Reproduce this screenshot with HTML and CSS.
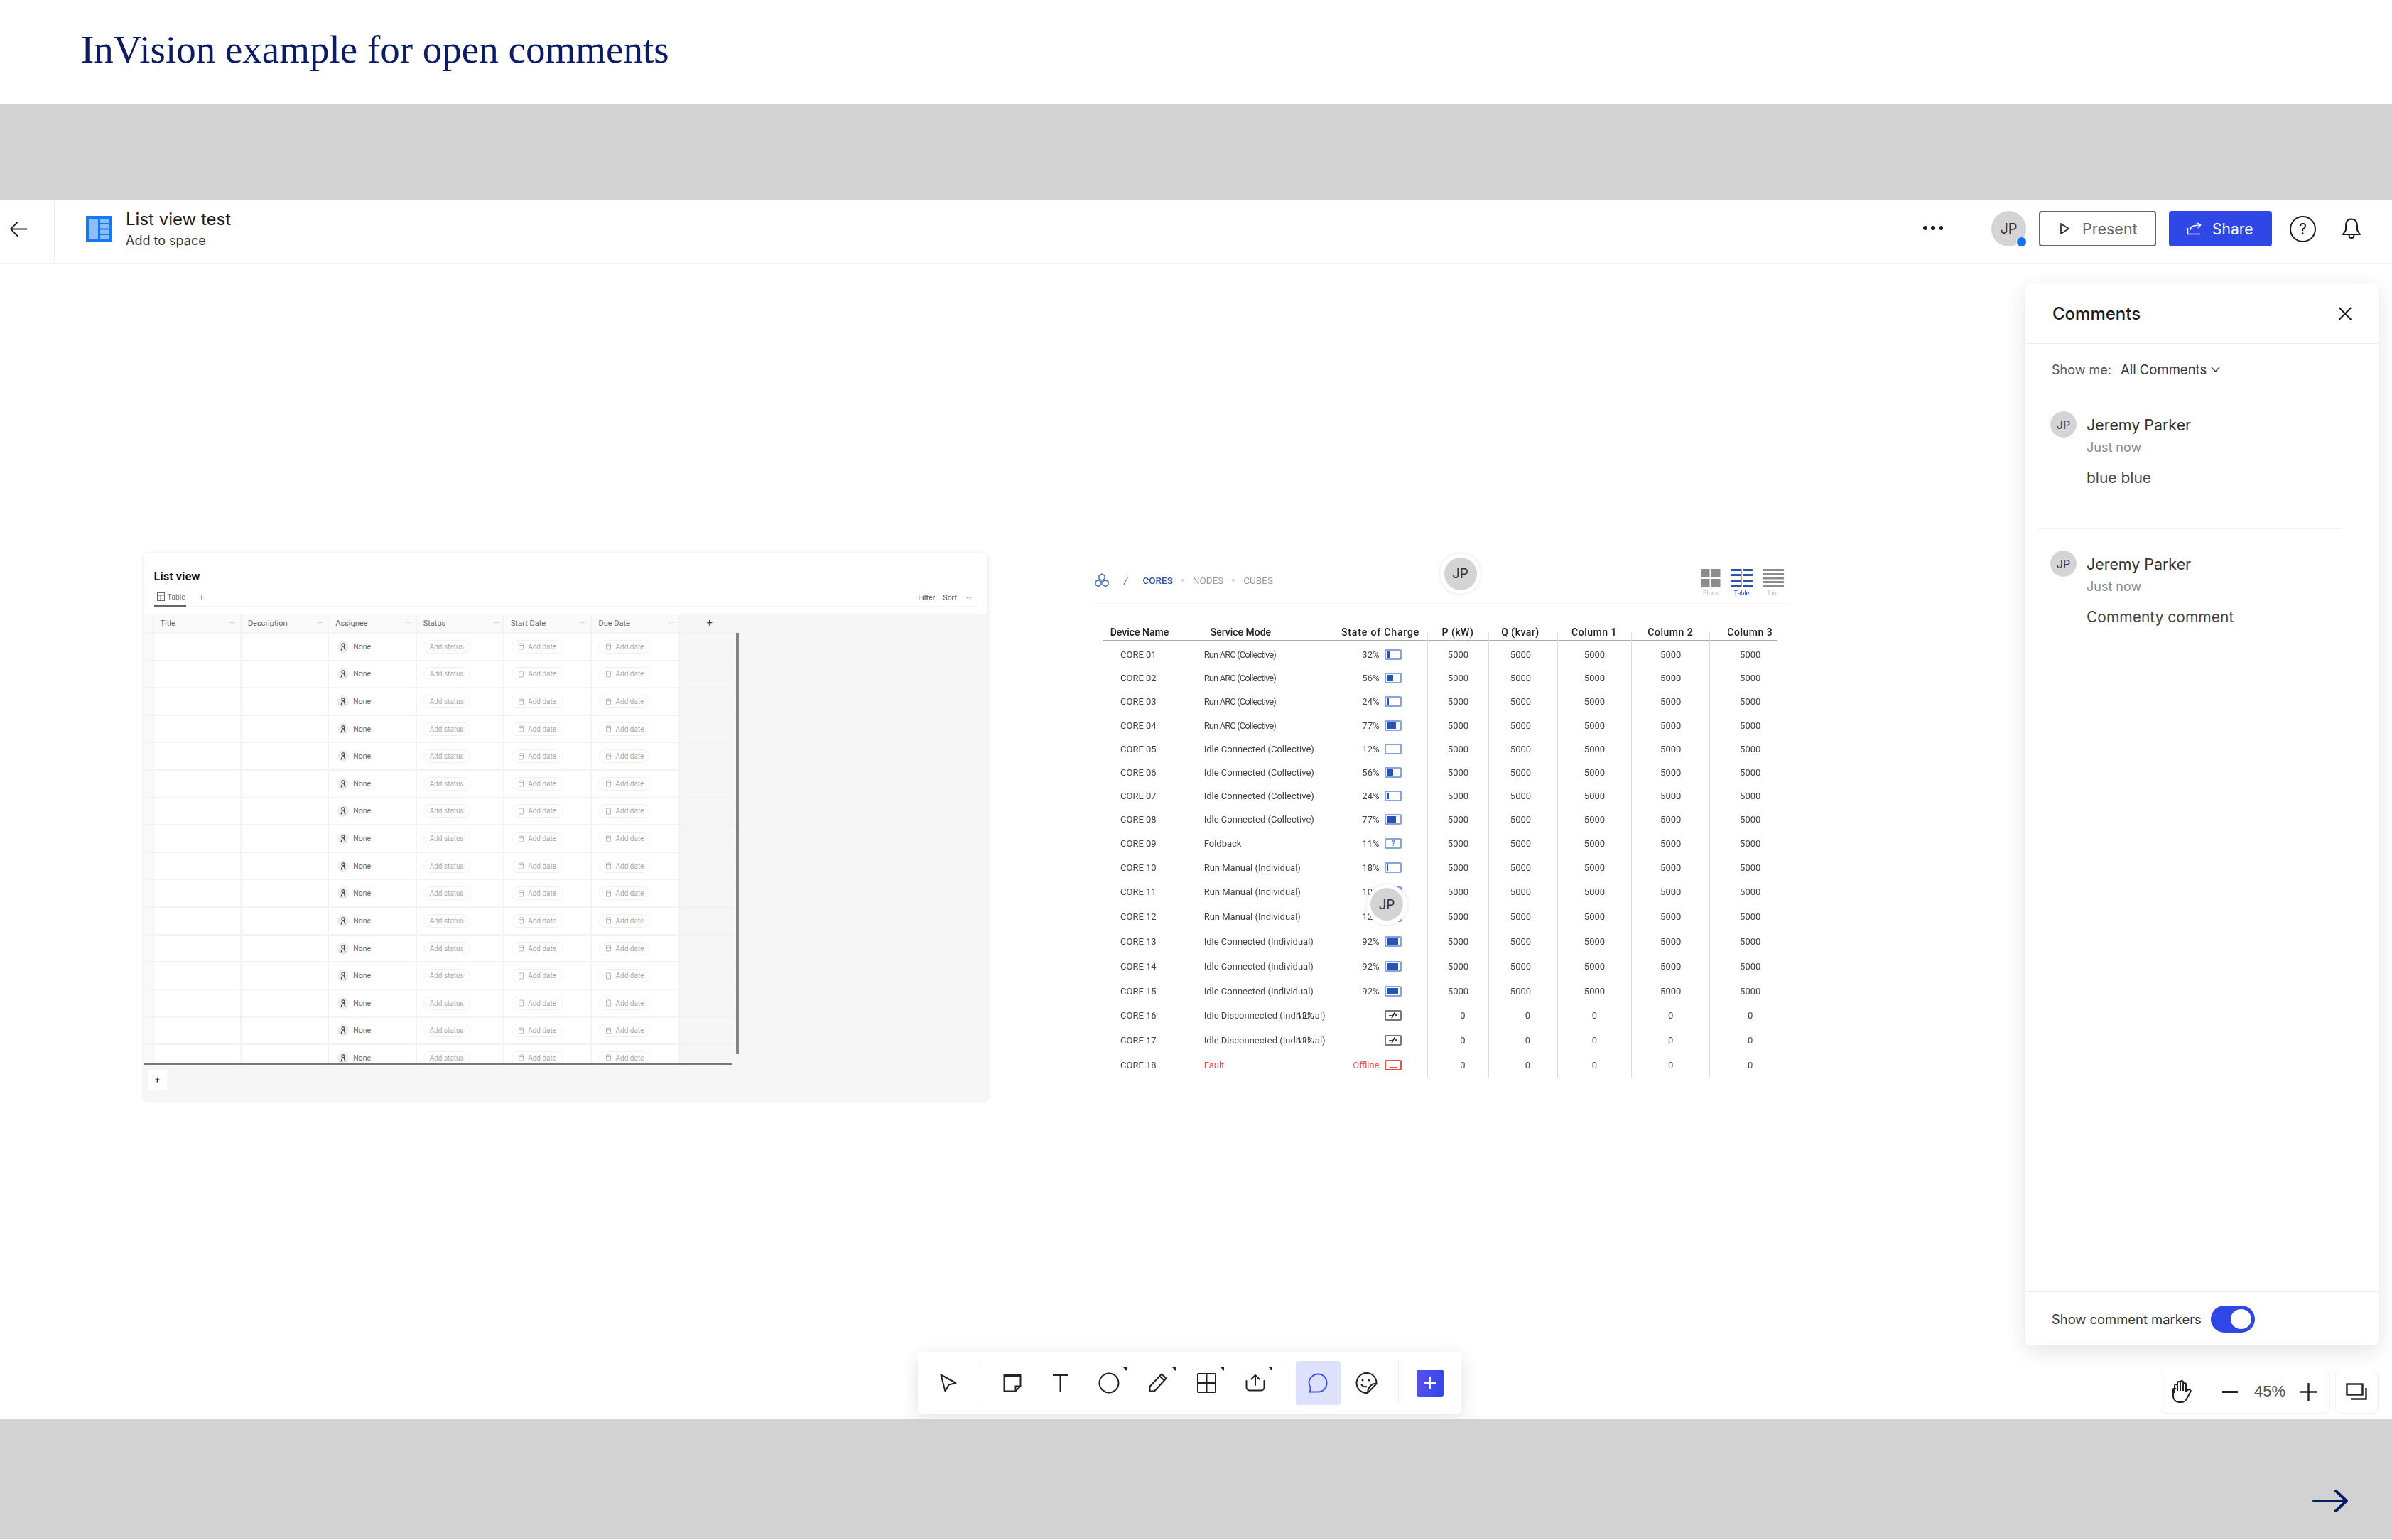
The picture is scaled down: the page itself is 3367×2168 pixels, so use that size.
FILE: index.html
```html
<!DOCTYPE html>
<html lang="en">
  <head>
    <meta charset="UTF-8" />
    <title>InVision example for open comments</title>
    <link rel="stylesheet" href="styles.css">
  </head>
  <body>
    <header class="page-head">
      <h1 class="page-title">InVision example for open comments</h1>
    </header>
    <div class="band band-top"></div>

    <main class="app">
      <div class="topbar">
        <div class="back-cell">
          <svg width="26" height="23" viewBox="0 0 26 23" fill="none" stroke="#222" stroke-width="1.8"><path d="M12 1.5 2 11.5l10 10M2 11.5h23" /></svg>
        </div>
        <div class="file">
          <svg width="37" height="37" viewBox="0 0 37 37"><rect width="37" height="37" fill="#1877f2" /><rect x="4" y="5" width="13" height="27" fill="#8fbdf9" /><rect x="20" y="5" width="12" height="5" fill="#8fbdf9" /><rect x="20" y="12" width="12" height="5.5" fill="#8fbdf9" /><rect x="20" y="19.5" width="12" height="5.5" fill="#8fbdf9" /><rect x="20" y="27" width="12" height="5" fill="#8fbdf9" /></svg>
          <div class="file-text">
            <div class="file-name">List view test</div>
            <div class="file-sub">Add to space</div>
          </div>
        </div>
        <div class="topbar-right">
          <div class="more-dots"><span></span><span></span><span></span></div>
          <div class="user-avatar">JP<span class="user-dot"></span></div>
          <button class="btn btn-present">
            <svg width="15" height="18" viewBox="0 0 15 18" fill="none" stroke="#333" stroke-width="1.8" stroke-linejoin="round"><path d="M2 2l11 7-11 7z" /></svg>
            Present
          </button>
          <button class="btn btn-share">
            <svg width="21" height="18" viewBox="0 0 21 18" fill="none" stroke="#fff" stroke-width="1.6"><path d="M1.5 8v8.5H19M5 11c0-5 4-7 14-7M15 1l4.500 3-3.500 4" /></svg>
            Share
          </button>
          <div class="help">?</div>
          <svg class="bell" width="28" height="30" viewBox="0 0 28 30" fill="none" stroke="#1b1b1b" stroke-width="2" stroke-linejoin="round"><path d="M14 1.500C8.500 1.500 6 5.500 6 11v6l-4 6h24l-4-6v-6c0-5.500-2.500-9.500-8-9.500zM10.500 23.500c0 6 7 6 7 0" /></svg>
        </div>
      </div>

      <!-- list view frame on the canvas -->
      <section class="list-card">
        <div class="card-head">
          <div class="card-title">List view</div>
          <div class="card-tabs">
            <div class="tab">
              <svg width="11" height="12" viewBox="0 0 11 12" fill="none" stroke="#666"><rect x=".5" y=".5" width="10" height="11" /><path d="M.5 4h10M5 4v7.500" /></svg>
              Table
            </div>
            <span class="tab-add">+</span>
            <div class="card-actions"><span>Filter</span><span>Sort</span><span class="card-dots">···</span></div>
          </div>
        </div>
        <div class="list-table">
          <div class="list-row list-header">
            <div class="list-cell"></div>
            <div class="list-cell">Title<i>···</i></div>
            <div class="list-cell">Description<i>···</i></div>
            <div class="list-cell">Assignee<i>···</i></div>
            <div class="list-cell">Status<i>···</i></div>
            <div class="list-cell">Start Date<i>···</i></div>
            <div class="list-cell">Due Date<i>···</i></div>
            <div class="list-cell list-plus">+</div>
          </div>
          <div id="list-rows"></div>
          <div class="scroll-v"></div>
          <div class="scroll-h"></div>
        </div>
        <div class="card-foot"><div class="add-row">+</div></div>
      </section>

      <!-- cores table frame on the canvas -->
      <section class="sheet">
        <div class="sheet-bar">
          <div class="crumbs">
            <svg width="22" height="20" viewBox="0 0 22 20" fill="none" stroke="#4a6cc0" stroke-width="1.500"><path d="M11 1l4 2.300v4.600l-4 2.300-4-2.300V3.300zM6 9.500l4 2.300v4.600L6 18.700l-4-2.300v-4.600zM16 9.500l4 2.300v4.600l-4 2.300-4-2.300v-4.600z" /></svg>
            <span class="crumb-slash">/</span>
            <span class="crumb-on">CORES</span>
            <span class="crumb-dot"></span>
            <span>NODES</span>
            <span class="crumb-dot"></span>
            <span>CUBES</span>
          </div>
          <div class="views">
            <div class="view">
              <svg width="28" height="26" viewBox="0 0 28 26" fill="#8c8c8c"><rect width="12.500" height="11.500" /><rect x="15" width="12.500" height="11.500" /><rect y="14" width="12.500" height="12" /><rect x="15" y="14" width="12.500" height="12" /></svg>
              <span>Block</span>
            </div>
            <div class="view view-on">
              <svg width="31" height="26" viewBox="0 0 31 26" fill="#2a52b0"><rect width="14" height="3" /><rect x="17" width="14" height="3" /><rect y="7" width="14" height="3" /><rect x="17" y="7" width="14" height="3" /><rect y="15" width="14" height="3" /><rect x="17" y="15" width="14" height="3" /><rect y="23" width="14" height="3" /><rect x="17" y="23" width="14" height="3" /><rect x="15" width="1" height="26" opacity=".5" /></svg>
              <span>Table</span>
            </div>
            <div class="view">
              <svg width="30" height="26" viewBox="0 0 30 26" fill="#8c8c8c"><rect width="30" height="3" /><rect y="5.500" width="30" height="3" /><rect y="11.500" width="30" height="3" /><rect y="17" width="30" height="3" /><rect y="23" width="30" height="3" /></svg>
              <span>List</span>
            </div>
          </div>
        </div>
        <div class="core-row core-head">
          <div>Device Name</div>
          <div>Service Mode</div>
          <div>State of Charge</div>
          <div class="core-num">P (kW)</div>
          <div class="core-num">Q (kvar)</div>
          <div class="core-num">Column 1</div>
          <div class="core-num">Column 2</div>
          <div class="core-num">Column 3</div>
        </div>
        <div id="core-rows"></div>
      </section>

      <div class="marker marker-one"><span>JP</span></div>
      <div class="marker marker-two"><span>JP</span></div>

      <aside class="comments">
        <div class="comments-head">
          <h2>Comments</h2>
          <svg width="20" height="19" viewBox="0 0 20 19" fill="none" stroke="#1b1b1b" stroke-width="2"><path d="M1.500 1l17 17M18.500 1l-17 17" /></svg>
        </div>
        <div class="comments-filter">
          <span>Show me:</span>
          <span class="filter-value">All Comments</span>
          <svg width="13" height="8" viewBox="0 0 13 8" fill="none" stroke="#333" stroke-width="1.400"><path d="M1 1l5.500 6L12 1" /></svg>
        </div>
        <div class="comment">
          <div class="comment-avatar">JP</div>
          <div class="comment-body">
            <div class="comment-name">Jeremy Parker</div>
            <div class="comment-time">Just now</div>
            <div class="comment-text">blue blue</div>
          </div>
        </div>
        <div class="comment-rule"></div>
        <div class="comment">
          <div class="comment-avatar">JP</div>
          <div class="comment-body">
            <div class="comment-name">Jeremy Parker</div>
            <div class="comment-time">Just now</div>
            <div class="comment-text">Commenty comment</div>
          </div>
        </div>
        <div class="comments-foot">
          <span>Show comment markers</span>
          <div class="toggle"><span></span></div>
        </div>
      </aside>

      <div class="toolbar">
        <div class="tool">
          <svg width="24" height="26" viewBox="0 0 24 26" fill="none" stroke="#222" stroke-width="2" stroke-linejoin="round"><path d="M1.500 1.500l21 11.500-10 2.500-5 9z" /></svg>
        </div>
        <div class="tool-sep"></div>
        <div class="tool">
          <svg width="26" height="26" viewBox="0 0 26 26" fill="none" stroke="#222" stroke-width="2"><path d="M1.500 2h23v15.500l-7 7h-16zM24.500 17.500h-7v7" /><path d="M1.500 2.500h23" stroke-width="3" /></svg>
        </div>
        <div class="tool">
          <svg width="21" height="26" viewBox="0 0 21 26" fill="none" stroke="#222" stroke-width="2"><path d="M0 2h21M10.500 2v24" /></svg>
        </div>
        <div class="tool tool-more">
          <svg width="30" height="30" viewBox="0 0 30 30" fill="none" stroke="#222" stroke-width="2"><circle cx="15" cy="15" r="13.500" /></svg>
        </div>
        <div class="tool tool-more">
          <svg width="26" height="27" viewBox="0 0 26 27" fill="none" stroke="#222" stroke-width="2" stroke-linejoin="round"><path d="M1.500 25.500V19L18 1.500l6.500 6L8 25.500zM15.500 4.500l6.500 6" /></svg>
        </div>
        <div class="tool tool-more">
          <svg width="27" height="28" viewBox="0 0 27 28" fill="none" stroke="#222" stroke-width="2"><rect x="1" y="1" width="25" height="26" rx="1" /><path d="M13.500 1v26M1 14h25" /></svg>
        </div>
        <div class="tool tool-more">
          <svg width="28" height="25" viewBox="0 0 28 25" fill="none" stroke="#222" stroke-width="2" stroke-linecap="round"><path d="M14 16V2M8.500 7.500 14 2l5.500 5.500M1.500 10v9a4.500 4.500 0 0 0 4.500 4.500h16a4.500 4.500 0 0 0 4.500-4.500v-9" /></svg>
        </div>
        <div class="tool-sep"></div>
        <div class="tool tool-active">
          <svg width="28" height="28" viewBox="0 0 28 28" fill="none" stroke="#3f50e8" stroke-width="2"><path d="M14.500 1.500C21.500 1.500 26.500 7 26.500 14s-5 12.500-12 12.500h-12c1.500-2.500 1.500-5 1-6.500-1.500-2-2-4-2-6C1.500 7 7.500 1.500 14.500 1.500z" /></svg>
        </div>
        <div class="tool tool-sticker">
          <svg width="31" height="30" viewBox="0 0 31 30" fill="none" stroke="#222" stroke-width="2"><path d="M29.500 16A14 14 0 1 0 17 29zM29.500 16c-6-1-12 4-12.500 13" /><circle cx="10" cy="11" r="1.500" fill="#222" stroke="none" /><circle cx="19" cy="11" r="1.500" fill="#222" stroke="none" /><path d="M8 17c2 3 5 3.500 8 3" /></svg>
        </div>
        <div class="tool-sep"></div>
        <div class="tool-add">
          <svg width="18" height="18" viewBox="0 0 18 18" fill="none" stroke="#fff" stroke-width="2"><path d="M9 1v16M1 9h16" /></svg>
        </div>
      </div>

      <div class="zoom-box">
        <svg width="30" height="32" viewBox="0 0 30 32" fill="none" stroke="#222" stroke-width="2" stroke-linejoin="round"><path d="M6 18V8a2 2 0 0 1 4 0v7M10 15V4a2 2 0 0 1 4 0v11M14 15V3a2 2 0 0 1 4 0v12M18 15V6a2 2 0 0 1 4 0v10l2.500-2a2.300 2.300 0 0 1 3.500 3l-5 9a8 8 0 0 1-7 5h-3c-6 0-9-4-9-9v-8a2 2 0 0 1 4-1" /></svg>
        <div class="zoom-sep"></div>
        <svg class="zoom-minus" width="22" height="3" viewBox="0 0 22 3"><rect width="22" height="3" fill="#222" /></svg>
        <span class="zoom-value">45%</span>
        <svg width="25" height="25" viewBox="0 0 25 25" fill="none" stroke="#222" stroke-width="2.400"><path d="M12.500 0v25M0 12.500h25" /></svg>
      </div>
      <div class="zoom-box zoom-pages">
        <svg width="30" height="24" viewBox="0 0 30 24" fill="none" stroke="#222" stroke-width="2.400"><rect x="1.500" y="1.500" width="22" height="15" /><path d="M28.500 7v15.500H7" /></svg>
      </div>
    </main>

    <footer class="band band-bottom">
      <svg width="50" height="32" viewBox="0 0 50 32" fill="none" stroke="#0b1c64" stroke-width="4" stroke-linecap="round" stroke-linejoin="round"><path d="M2 16h46M33 2l15 14-15 14" /></svg>
    </footer>

    <script src="app.js"></script>
  </body>
</html>
```

FILE: styles.css
```css
* {
  box-sizing: border-box;
  margin: 0;
}
body {
  width: 3367px;
  height: 2168px;
  overflow: hidden;
  background-color: white;
  font-family: "Inter", sans-serif;
  color: #1b1b1b;
}

.page-head {
  height: 146px;
  padding: 41px 0 0 114px;
}
.page-title {
  font-family: "Liberation Serif", serif;
  font-size: 55px;
  font-weight: 400;
  line-height: 58px;
  color: #0b1c64;
}

.band {
  background-color: #d2d2d2;
}
.band-top {
  height: 135px;
}
.band-bottom {
  height: 169px;
  display: flex;
  justify-content: flex-end;
  padding: 99px 62px 0 0;
}

.app {
  position: relative;
  height: 1717px;
  overflow: hidden;
  background-color: white;
}

/* top bar */
.topbar {
  display: flex;
  align-items: center;
  height: 91px;
  border-bottom: 2px solid #efefef;
}
.back-cell {
  display: flex;
  width: 77px;
  height: 100%;
  padding: 30px 0 0 13px;
  border-right: 1px solid #efefef;
}
.file {
  display: flex;
  align-items: center;
  gap: 19px;
  margin-left: 44px;
  padding-bottom: 6px;
}
.file-text {
  display: flex;
  flex-direction: column;
  gap: 5px;
}
.file-name {
  font-size: 24px;
  line-height: 28px;
}
.file-sub {
  font-size: 18px;
  line-height: 22px;
  color: #333;
}
.topbar-right {
  display: flex;
  align-items: center;
  margin-left: auto;
  padding: 0 43px 7px 0;
}
.more-dots {
  display: flex;
  justify-content: space-between;
  width: 28px;
  margin-right: 68px;
  margin-top: -2px;
}
.more-dots span {
  width: 5.5px;
  height: 5.5px;
  border-radius: 50%;
  background-color: #222;
}
.user-avatar {
  position: relative;
  display: flex;
  align-items: center;
  justify-content: center;
  width: 49px;
  height: 50px;
  border-radius: 50%;
  background-color: #d4d4d6;
  font-size: 20px;
  color: #333;
  margin-right: 18px;
}
.user-dot {
  position: absolute;
  right: -1px;
  bottom: -1px;
  width: 15px;
  height: 15px;
  border-radius: 50%;
  background-color: #1272ee;
  border: 1px solid white;
}
.btn {
  display: flex;
  align-items: center;
  height: 50px;
  font-family: "Inter", sans-serif;
  font-size: 21px;
  border-radius: 4px;
  border: none;
}
.btn-present {
  width: 165px;
  padding-left: 27px;
  gap: 17px;
  margin-right: 18px;
  background-color: white;
  border: 2px solid #666;
  color: #666;
  font-size: 21.5px;
}
.btn-share {
  width: 145px;
  padding-left: 25px;
  gap: 15px;
  background-color: #2e47e6;
  color: white;
  margin-right: 25px;
}
.help {
  display: flex;
  align-items: center;
  justify-content: center;
  width: 37px;
  height: 37px;
  border: 2px solid #1b1b1b;
  border-radius: 50%;
  font-size: 21px;
  margin-right: 36px;
}

/* list view frame */
.list-card {
  position: absolute;
  left: 203px;
  top: 498px;
  display: flex;
  flex-direction: column;
  width: 1187px;
  height: 769px;
  background-color: #f6f6f6;
  border-radius: 3px;
  box-shadow: 0 1px 6px rgba(0, 0, 0, 0.12);
  font-family: "Roboto", sans-serif;
  filter: blur(0.4px);
}
.card-head {
  height: 85px;
  padding: 21px 15px 0 13.5px;
  background-color: white;
}
.card-title {
  font-size: 16.5px;
  font-weight: 600;
  line-height: 24px;
  color: #111;
}
.card-tabs {
  display: flex;
  align-items: center;
  height: 25px;
  margin-top: 5px;
  border-bottom: 1px solid #f4f4f4;
  font-size: 10.5px;
  color: #777;
}
.tab {
  display: flex;
  align-items: center;
  gap: 4px;
  width: 45px;
  height: 25px;
  padding-left: 4px;
  border-bottom: 2px solid #666;
}
.tab-add {
  margin-left: 18px;
  font-size: 15px;
  color: #aaa;
}
.card-actions {
  display: flex;
  gap: 11px;
  margin-left: auto;
  padding-right: 6px;
  color: #666;
  font-weight: 500;
}
.card-actions .card-dots {
  color: #aaa;
  margin-left: 2px;
}
.list-table {
  position: relative;
  width: 838px;
  height: 637px;
  overflow: hidden;
}
.list-row {
  display: grid;
  grid-template-columns: 13.5px repeat(6, 123.4px) 84px;
  height: 38.62px;
  background-color: white;
}
.list-cell {
  display: flex;
  align-items: center;
  padding-left: 9px;
  border-right: 2px solid #f3f3f3;
  border-bottom: 2px solid #f3f3f3;
  font-size: 10.5px;
  color: #666;
}
.list-row .list-cell:first-child {
  background-color: #f9f9f9;
}
.list-row .list-cell:last-child {
  background-color: #f6f6f6;
  border-right: none;
}
.list-header {
  height: 28px;
  background-color: #fafafa;
}
.list-header .list-cell {
  font-size: 11px;
}
.list-header .list-cell i {
  margin-left: auto;
  padding-right: 6px;
  font-style: normal;
  color: #aaa;
}
.list-header .list-plus {
  justify-content: center;
  padding: 0;
  font-size: 14px;
  color: #333;
}
.person {
  display: flex;
  align-items: center;
  justify-content: center;
  width: 16px;
  height: 17px;
  margin: 0 6px 0 3px;
  border-radius: 50%;
  background-color: #eee;
}
.pill {
  display: flex;
  align-items: center;
  gap: 6px;
  height: 19px;
  padding: 0 8px;
  border: 1px solid #f1f1f1;
  border-radius: 10px;
  font-size: 10px;
  color: #aaa;
  white-space: nowrap;
}
.pill-date {
  padding: 0 8px 0 9px;
  width: 72px;
  margin-left: 1px;
}
.scroll-v {
  position: absolute;
  left: 833px;
  top: 27px;
  width: 3.5px;
  height: 593px;
  background-color: #858585;
}
.scroll-h {
  position: absolute;
  left: 0;
  top: 632px;
  width: 828px;
  height: 3.5px;
  background-color: #777;
}
.card-foot {
  padding: 6px 5px;
}
.add-row {
  display: flex;
  align-items: center;
  justify-content: center;
  width: 27px;
  height: 27px;
  background-color: white;
  font-size: 13px;
  font-weight: 700;
  color: #333;
}

/* cores table frame */
.sheet {
  position: absolute;
  left: 1520px;
  top: 489px;
  width: 1000px;
  font-family: "Roboto", sans-serif;
  filter: blur(0.35px);
}
.sheet-bar {
  display: flex;
  justify-content: space-between;
  align-items: flex-start;
  height: 80px;
  margin-left: 20px;
  margin-bottom: 30px;
  padding-right: 9px;
  border-bottom: 1px solid #f4f4f4;
}
.crumbs {
  display: flex;
  align-items: center;
  margin-top: 37px;
  font-size: 13.5px;
  color: #999;
}
.crumb-slash {
  margin: 0 21px 0 20px;
  color: #4a6cc0;
  font-style: italic;
}
.crumb-on {
  color: #3457a8;
  font-weight: 500;
}
.crumb-dot {
  width: 4px;
  height: 4px;
  margin: 0 12px;
  background-color: #ddd;
}
.views {
  display: flex;
  gap: 14px;
  margin-top: 31px;
}
.view {
  display: flex;
  flex-direction: column;
  align-items: center;
  gap: 3px;
  font-size: 9px;
  line-height: 11px;
  color: #bbb;
}
.view-on {
  color: #2a52b0;
}
.core-row {
  display: grid;
  grid-template-columns: 142.7px 185.3px 129px 86px 97px 104px 110.5px 113.5px;
  margin-left: 32px;
  font-size: 13px;
  color: #444;
  align-items: stretch;
  height: 33.2px;
}
.core-row.tall {
  height: 34.8px;
}
.core-row > div {
  display: flex;
  align-items: center;
}
.core-name {
  padding-left: 25px;
}
.core-soc {
  justify-content: flex-end;
  padding-right: 35.5px;
  gap: 8px;
}
.core-num {
  justify-content: center;
  border-left: 1px solid #ddd;
}
.core-row > .core-num:nth-child(5) {
  padding-right: 7px;
}
.core-row > .core-zero:nth-child(4) {
  padding-left: 13px;
}
.core-row > .core-zero:nth-child(5) {
  padding-left: 20px;
}
.mode-tight {
  letter-spacing: -0.9px;
}
.core-head {
  height: 25px;
  font-size: 14px;
  font-weight: 500;
  color: #222;
  background: linear-gradient(#aaa, #aaa) left 21px / 950px 2px no-repeat;
}
.core-head > div {
  align-items: flex-start;
  line-height: 20px;
}
.core-head > div:nth-child(1) {
  padding-left: 10.7px;
}
.core-head > div:nth-child(2) {
  padding-left: 9px;
}
.core-head > div:nth-child(3) {
  padding-left: 8px;
  letter-spacing: 0.85px;
}
.core-head > .core-num {
  border-left: none;
  letter-spacing: 0.5px;
  background: linear-gradient(#ddd, #ddd) left 10px / 1px 15px no-repeat;
}
.fault {
  color: #ee4f43;
}
.batt {
  display: flex;
  align-items: center;
  justify-content: center;
  width: 24px;
  height: 15px;
  padding: 1px;
  border: 2px solid #8aa3dc;
  border-radius: 2px;
  background-color: white;
}
.batt-fill {
  height: 100%;
  margin-right: auto;
  background-color: #2a52b0;
}
.batt-unknown {
  color: #5f80cf;
  font-size: 10px;
  font-weight: 700;
}
.batt-off {
  border-color: #777;
}
.batt-fault {
  align-items: flex-end;
  border-color: #ee4f43;
}
.batt-fault span {
  width: 10px;
  height: 2px;
  background-color: #ee4f43;
}
.soc-stray {
  position: relative;
  left: -92px;
  color: #333;
}

/* comment markers */
.marker {
  position: absolute;
  width: 57px;
  height: 57px;
  padding: 5.5px;
  border-radius: 50%;
  background-color: white;
  box-shadow: 0 0 5px rgba(0, 0, 0, 0.12);
}
.marker span {
  display: flex;
  align-items: center;
  justify-content: center;
  width: 46px;
  height: 46px;
  border-radius: 50%;
  background-color: #d4d4d6;
  font-size: 19px;
  color: #333;
}
.marker-one {
  left: 2027px;
  top: 498px;
}
.marker-two {
  left: 1923.5px;
  top: 963.5px;
}

/* comments panel */
.comments {
  position: absolute;
  left: 2851px;
  top: 118px;
  display: flex;
  flex-direction: column;
  width: 497px;
  height: 1495px;
  background-color: white;
  border-radius: 8px;
  box-shadow: 0 8px 30px rgba(0, 0, 0, 0.11);
}
.comments-head {
  display: flex;
  align-items: center;
  justify-content: space-between;
  height: 85px;
  padding: 0 37px 0 38px;
  border-bottom: 1px solid #eee;
}
.comments-head h2 {
  font-size: 24px;
  font-weight: 500;
}
.comments-filter {
  display: flex;
  align-items: center;
  gap: 13px;
  height: 24px;
  margin: 24px 0 47px 37px;
  font-size: 18px;
  color: #555;
}
.filter-value {
  font-size: 18.5px;
  color: #333;
  margin-right: -7px;
}
.comment {
  display: flex;
  gap: 14px;
  padding-left: 35px;
  height: 110px;
}
.comment-avatar {
  display: flex;
  align-items: center;
  justify-content: center;
  flex: none;
  width: 37px;
  height: 37px;
  border-radius: 50%;
  background-color: #d4d4d6;
  font-size: 16px;
  color: #444;
}
.comment-body {
  padding-top: 5px;
}
.comment-name {
  font-size: 21.4px;
  line-height: 28px;
  color: #333;
}
.comment-time {
  margin-top: 6px;
  font-size: 18px;
  line-height: 24px;
  color: #8a8a8f;
}
.comment-text {
  margin-top: 17px;
  font-size: 21px;
  line-height: 28px;
  color: #444;
}
.comment-rule {
  height: 2px;
  margin: 54px 52px 30px 18px;
  background-color: #f2f2f2;
}
.comments-foot {
  display: flex;
  align-items: center;
  gap: 13px;
  height: 76px;
  margin-top: auto;
  padding-left: 37px;
  border-top: 1px solid #eee;
  font-size: 18.4px;
  color: #333;
}
.toggle {
  width: 62px;
  height: 38px;
  padding: 5px 0 0 28px;
  border-radius: 19px;
  background-color: #2e47e6;
}
.toggle span {
  display: block;
  width: 29px;
  height: 28px;
  border-radius: 50%;
  background-color: white;
}

/* canvas toolbar */
.toolbar {
  position: absolute;
  left: 1292px;
  top: 1622px;
  display: flex;
  align-items: center;
  width: 765px;
  height: 87px;
  padding-left: 9px;
  background-color: white;
  border-radius: 6px;
  box-shadow: 0 6px 24px rgba(0, 0, 0, 0.12);
}
.tool {
  position: relative;
  display: flex;
  align-items: center;
  justify-content: center;
  width: 68.4px;
  height: 62px;
}
.tool-more::after {
  content: "";
  position: absolute;
  top: 8px;
  left: 53px;
  border-top: 6px solid #222;
  border-left: 6px solid transparent;
}
.tool-sep {
  width: 1px;
  height: 62px;
  margin: 0 10px;
  background-color: #eee;
}
.tool-active {
  width: 63px;
  margin-left: 2px;
  border-radius: 4px;
  background-color: #dde1fa;
}
.tool-sticker {
  margin-left: 3px;
}
.tool-add {
  display: flex;
  align-items: center;
  justify-content: center;
  width: 38px;
  height: 38px;
  margin-left: 15px;
  border-radius: 3px;
  background: linear-gradient(100deg, #5b50e8, #3346e8);
}

/* zoom controls */
.zoom-box {
  position: absolute;
  left: 3040px;
  top: 1647px;
  display: flex;
  align-items: center;
  width: 240px;
  height: 62px;
  padding-left: 14px;
  background-color: white;
  border: 1px solid #f0f0f0;
  border-radius: 8px;
}
.zoom-sep {
  width: 1px;
  height: 50px;
  margin: 0 25px 0 17px;
  background-color: #eee;
}
.zoom-value {
  margin: 0 20px 0 23px;
  font-family: "Liberation Sans", sans-serif;
  font-size: 22px;
  color: #555;
}
.zoom-pages {
  left: 3287px;
  width: 61px;
}
```

FILE: app.js
```js
const cores = [
  ["01", "Run ARC (Collective)", 32],
  ["02", "Run ARC (Collective)", 56],
  ["03", "Run ARC (Collective)", 24],
  ["04", "Run ARC (Collective)", 77],
  ["05", "Idle Connected (Collective)", 12],
  ["06", "Idle Connected (Collective)", 56],
  ["07", "Idle Connected (Collective)", 24],
  ["08", "Idle Connected (Collective)", 77],
  ["09", "Foldback", 11],
  ["10", "Run Manual (Individual)", 18],
  ["11", "Run Manual (Individual)", 10],
  ["12", "Run Manual (Individual)", 12],
  ["13", "Idle Connected (Individual)", 92],
  ["14", "Idle Connected (Individual)", 92],
  ["15", "Idle Connected (Individual)", 92],
  ["16", "Idle Disconnected (Individual)", 12],
  ["17", "Idle Disconnected (Individual)", 12],
  ["18", "Fault", 0],
];

const personIcon = `<svg width="8" height="11" viewBox="0 0 8 11" fill="none" stroke="#444" stroke-width="1.300"><circle cx="4" cy="2.800" r="2" /><path d="M1 10.500 3 5M7 10.500 5 5" /></svg>`;
const dateIcon = `<svg width="8" height="10" viewBox="0 0 8 10" fill="none" stroke="#aaa"><rect x=".5" y=".5" width="7" height="9" rx="1" /><path d="M.5 3.500h7" /></svg>`;
const unplugIcon = `<svg width="14" height="9" viewBox="0 0 14 9" fill="none" stroke="#111" stroke-width="1.600"><path d="M1 5h4M9 4h4M9 .5 5 8.500" /></svg>`;

function batteryFor(core) {
  const [id, mode, charge] = core;
  if (mode === "Fault") return `<div class="batt batt-fault"><span></span></div>`;
  if (mode === "Foldback") return `<div class="batt batt-unknown">?</div>`;
  if (mode.startsWith("Idle Disconnected")) return `<div class="batt batt-off">${unplugIcon}</div>`;
  // the fill sits inside an 18px wide cell and stays empty at the low end
  const fill = Math.max(0, Math.round(((charge - 10) / 82) * 16));
  return `<div class="batt"><div class="batt-fill" style="width: ${fill}px"></div></div>`;
}

function socLabel(core) {
  const [id, mode, charge] = core;
  if (mode === "Fault") return `<span class="fault">Offline</span>`;
  if (mode.startsWith("Idle Disconnected")) return `<span class="soc-stray">${charge}%</span>`;
  return `<span>${charge}%</span>`;
}

function modeClass(mode) {
  if (mode === "Fault") return "fault";
  if (mode.startsWith("Run ARC")) return "mode-tight";
  return "";
}

function displayCores() {
  const coreRows = document.getElementById("core-rows");
  let html = "";
  for (let i = 0; i < cores.length; i++) {
    const core = cores[i];
    const isOff = core[1].startsWith("Idle Disconnected") || core[1] === "Fault";
    const value = isOff ? "0" : "5000";
    const zero = isOff ? " core-zero" : "";
    html += `
      <div class="core-row${i >= 9 ? " tall" : ""}">
        <div class="core-name">CORE ${core[0]}</div>
        <div class="${modeClass(core[1])}">${core[1]}</div>
        <div class="core-soc">${socLabel(core)}${batteryFor(core)}</div>
        <div class="core-num${zero}">${value}</div>
        <div class="core-num${zero}">${value}</div>
        <div class="core-num">${value}</div>
        <div class="core-num">${value}</div>
        <div class="core-num">${value}</div>
      </div>`;
  }
  coreRows.innerHTML = html;
}

function displayListRows() {
  const listRows = document.getElementById("list-rows");
  let html = "";
  for (let i = 0; i < 16; i++) {
    html += `
      <div class="list-row">
        <div class="list-cell"></div>
        <div class="list-cell"></div>
        <div class="list-cell"></div>
        <div class="list-cell"><span class="person">${personIcon}</span>None</div>
        <div class="list-cell"><span class="pill">Add status</span></div>
        <div class="list-cell"><span class="pill pill-date">${dateIcon}Add date</span></div>
        <div class="list-cell"><span class="pill pill-date">${dateIcon}Add date</span></div>
        <div class="list-cell"></div>
      </div>`;
  }
  listRows.innerHTML = html;
}

displayCores();
displayListRows();
```
